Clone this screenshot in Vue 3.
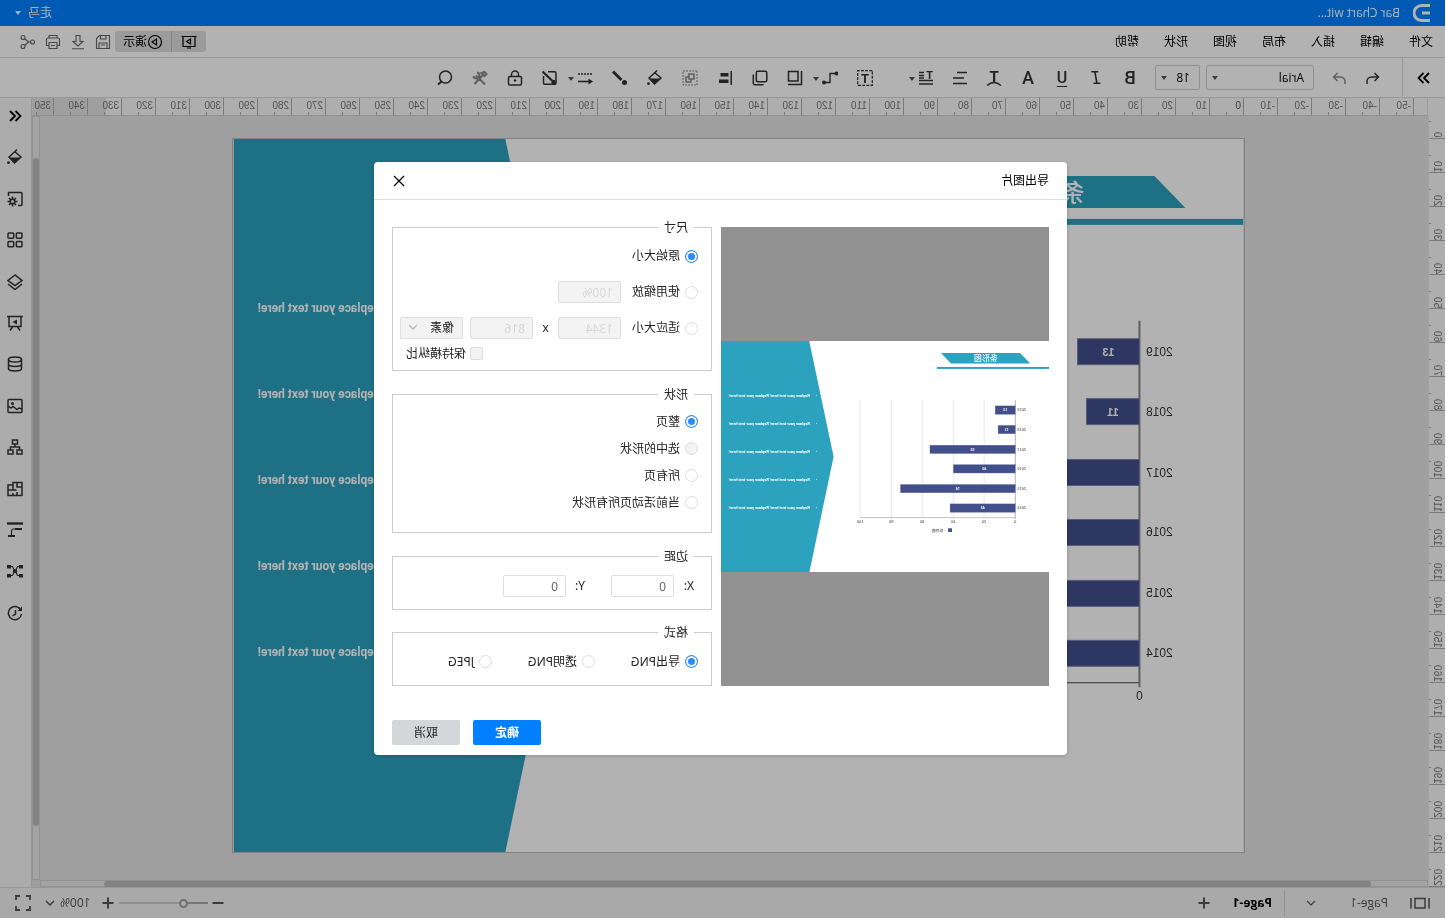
<script setup>
import { ref } from 'vue'

const menus = ['文件', '编辑', '插入', '布局', '视图', '形状', '帮助']

const glyphs = {
  logo: '<path d="M1 1.500h8.500a7.500 7.500 0 0 1 0 15H1M1 9h8" stroke-width="3"/>',
  undo: '<path d="M14 14v-2.500a4.500 4.500 0 0 0-4.500-4.500H2.500M6.500 3l-4 4 4 4"/>',
  redo: '<path d="M2 14v-2.500a4.500 4.500 0 0 1 4.500-4.500h7M9.500 3l4 4-4 4"/>',
  more: '<path d="M3 3l5 5-5 5M8.500 3l5 5-5 5" stroke-width="1.800"/>',
  less: '<path d="M13 3L8 8l5 5M7.500 3l-5 5 5 5" stroke-width="1.800"/>',
  curve: '<text x="8" y="11.500" font-size="15">T</text><path d="M1 15.500q7-6 14 0"/>',
  lines: '<path d="M1 2.500h10M4 8h11M1 13.500h14" stroke-width="1.600"/>',
  para: '<text x="4.500" y="8.500" font-size="11">T</text><path d="M10 2.500h5M10 5.500h5M1 10.500h14M1 14h14M10 8h5" stroke-width="1.300"/>',
  textbox: '<rect x=".700" y=".700" width="14.600" height="14.600" stroke-width="1.200" stroke-dasharray="3 1.200"/><text x="8" y="12.500" font-size="13">T</text>',
  connector: '<path d="M1.500 3.500H8v9h6.500" stroke-width="1.400"/><circle cx="1.500" cy="3.500" r="2" class="solid"/><circle cx="14" cy="12.500" r="2" class="solid"/>',
  front: '<path d="M5 1.500h9.500v9.500H5zM1.500 1v13.500H15"/>',
  copy: '<rect x="1.200" y="1.200" width="10.500" height="10.500" rx="1.500"/><path d="M4.500 14.700h8.700a1.500 1.500 0 0 0 1.500-1.500V4.500"/>',
  align: '<path d="M1.800 1v14" stroke-width="1.500"/><path d="M4.500 3h8v3.500h-8zM4.500 9.500H14V13H4.500z" class="solid"/>',
  group: '<rect x="1" y="1" width="14" height="14" stroke-width="1" stroke-dasharray="2 1"/><path d="M4 4h5v5H4zM9 7h3v5H7V9"/>',
  bucket: '<path d="M6 .500L9 3.500M8 2.500L14 8l-5.500 6L2 8l6.500-5.500"/><path d="M2.500 8.500h11L8.500 14.500z" class="solid"/><circle cx="14.500" cy="13.700" r="1.400" class="solid"/>',
  brush: '<path d="M15 1.500L6.500 10" stroke-width="2.800"/><circle cx="3.500" cy="12.500" r="2.500" class="solid"/>',
  dash: '<path d="M1 4h14" stroke-dasharray="2 1" stroke-width="1.600"/><path d="M15 11.500H2" stroke-width="1.600"/><path d="M0 11.500L4.500 8.500v6z" class="solid"/>',
  edit: '<path d="M10 1.700H3.500A1.500 1.500 0 0 0 2 3.200v9.600A1.500 1.500 0 0 0 3.500 14.300h9.500a1.500 1.500 0 0 0 1.500-1.500V6"/><path d="M15.500 1.500L6 10.500" stroke-width="2.300"/><circle cx="4.500" cy="12" r="2.300" class="solid"/>',
  lock: '<rect x="1.500" y="6.500" width="13" height="8.500" rx="1.500"/><path d="M4.500 6.500V4.500a3.500 3.500 0 0 1 7 0v2"/><circle cx="8" cy="10.500" r="1.300" class="solid"/>',
  tools: '<path d="M3 14.500l9-9M11 2.500a3 3 0 1 0 3.500 3.500M3.500 2L1.500 4l2 2 3-3zM5 5l8.500 9" stroke-width="2"/>',
  search: '<circle cx="7.500" cy="7" r="6"/><path d="M11.500 11.500l3.500 3" stroke-width="2"/>',
  screen: '<path d="M.5 2.500h15M2 3v9.500h12V3M6 14h4"/><path d="M6.500 5v5l4-2.500z"/>',
  play: '<circle cx="8" cy="8" r="6.500"/><path d="M6.500 5v6l4.500-3z"/>',
  save: '<path d="M1.500 1.500h10l3 3v10h-13zM4 14.500V9h8v5.500M5 1.500V5h5.500V1.500M6 11h4"/>',
  download: '<path d="M6 1.500h4v6h3L8 12 3 7.500h3zM2 14.800h12"/>',
  print: '<path d="M4 4V1.500h8V4M3.500 11.500h-2v-6a1.500 1.500 0 0 1 1.500-1.500h10a1.500 1.500 0 0 1 1.500 1.500v6h-2M4 8.500h8v6H4zM6 11.500h4"/>',
  share: '<circle cx="3.500" cy="8" r="2"/><circle cx="13" cy="3.500" r="2"/><circle cx="13" cy="12.500" r="2"/><path d="M5.500 8h2l4-3.500M7.500 8l4 3.500"/>',
  sheetset: '<path d="M5 14.500H2A1 1 0 0 1 1 13.500v-11a1 1 0 0 1 1-1h12.500V5"/><path d="M10.500 5.500v10M5.500 10.500h10M7 7l7 7M14 7l-7 7" stroke-width="1.600"/><circle cx="10.500" cy="10.500" r="3" class="solid"/><circle cx="10.500" cy="10.500" r="1.500" class="hole"/>',
  grid: '<rect x="1" y="1" width="5.700" height="5.300" rx="1"/><rect x="9.300" y="1" width="5.700" height="5.300" rx="1"/><rect x="1" y="9.500" width="5.700" height="5.300" rx="1"/><rect x="9.300" y="9.500" width="5.700" height="5.300" rx="1"/>',
  layers: '<path d="M8 1l7 5.500-7 5-7-5zM1 10l7 5.500 7-5.500"/>',
  board: '<path d="M0 1.500h16M2 2v9.500h12V2M5.500 12L3 15.500M10.500 12l2.500 3.500"/><path d="M6 4.500v5L10.500 7z" class="solid"/>',
  data: '<ellipse cx="8" cy="3.500" rx="6.500" ry="2.500"/><path d="M1.500 3.500v9c0 3.300 13 3.300 13 0v-9M1.500 8c0 3.300 13 3.300 13 0"/>',
  image: '<rect x="1" y="1.500" width="14" height="13" rx="1"/><path d="M1 11l3-1 2 1.500 4-3 2 1.500 3-2"/><circle cx="10.500" cy="5.500" r="1.500" class="solid"/>',
  tree: '<path d="M5.500 1h5v4h-5zM1 11h5v4H1zM10 11h5v4h-5zM8 5v3M3.500 11V8h9v3"/>',
  plan: '<path d="M1 1.500h9V4h5v10.500H1zM6 1.500V6H1M10 4v5M6.500 9H15M6 14.500V11M10 12v2.500"/>',
  gantt: '<path d="M0 1.500h16" stroke-width="2.400"/><path d="M1 7h7M8 14h7" stroke-width="2.200"/><path d="M8 7h1.500a2 2 0 0 1 2 2v5" stroke-width="1.200"/>',
  mesh: '<path d="M0 2h4v3.500H0zM12 2h4v3.500h-4zM0 11h4v3.500H0zM12 11h4v3.500h-4zM6 6.500h4v3.500H6z" class="solid"/><path d="M4 3.500h1.500l2 4M12 3.500h-1.500l-2 4M4 12.500h1.500l2-4M12 12.500h-1.500l-2-4" stroke-width="1.200"/>',
  history: '<path d="M2.500 4.500A6.600 6.600 0 1 1 1.500 9"/><path d="M1 1.500v4.500h4.500z" class="solid"/><path d="M7.500 5v4l3 2"/>',
  frame: '<path d="M1 3v10.500M19 3v10.500M5 3.500h10v9.500H5z"/>',
  down: '<path d="M4 6l4 4 4-4"/>',
  plus: '<path d="M8 2.500v11M2.500 8h11" stroke-width="2"/>',
  minus: '<path d="M2.500 8h11" stroke-width="2"/>',
  full: '<path d="M1 5V1h4M11 1h4v4M15 11v4h-4M5 15H1v-4" stroke-width="1.800"/>',
  close: '<path d="M3 3l10 10M13 3L3 13" stroke-width="1.200"/>'
}

const letters = ['B', 'I', 'U', 'A']
const textTools = [{ n: 'curve' }, { n: 'lines' }, { n: 'para', caret: true }]
const shapeTools = [
  { n: 'textbox' }, { n: 'connector', caret: true }, { n: 'front' }, { n: 'copy' }, { n: 'align' },
  { n: 'group', off: true }, { n: 'bucket' }, { n: 'brush' }, { n: 'dash', caret: true }, { n: 'edit' },
  { n: 'lock' }, { n: 'tools', off: true }, { n: 'search' }
]
const fileTools = ['save', 'download', 'print', 'share']
const sideTools = ['less', 'bucket', 'sheetset', 'grid', 'layers', 'board', 'data', 'image', 'tree', 'plan', 'gantt', 'mesh', 'history']

const hTicks = Array.from({ length: 41 }, (_, i) => i * 10 - 50)
const vTicks = Array.from({ length: 23 }, (_, i) => i * 10)

const bars = [
  { year: 2019, v: 13 }, { year: 2018, v: 11 }, { year: 2017, v: 55 },
  { year: 2016, v: 40 }, { year: 2015, v: 74 }, { year: 2014, v: 42 }
].map((b, i) => ({ ...b, y: 200 + Math.round(i * 60.4), w: Math.round(b.v * 4.78) }))
const axis = [0, 20, 40, 60, 80, 100].map(v => ({ v, x: 104 + Math.round(v * 4.78) }))
const notes = [0, 1, 2, 3, 4].map(i => 173 + Math.round(i * 86.25))

const size = ref('origin')
const scope = ref('page')
const format = ref('png')
const scopes = [
  { id: 'page', label: '整页' },
  { id: 'selected', label: '选中的形状', off: true },
  { id: 'all', label: '所有页' },
  { id: 'active', label: '当前活动页所有形状' }
]
const formats = [
  { id: 'png', label: '导出PNG' },
  { id: 'clear', label: '透明PNG' },
  { id: 'jpeg', label: 'JPEG' }
]
</script>

<template>
  <div class="app">
    <header class="titlebar">
      <svg class="logo" viewBox="0 0 18 18" v-html="glyphs.logo"></svg>
      <span class="doc">Bar Chart wit...</span>
      <button class="user">走马<i class="caret"></i></button>
    </header>

    <nav class="menubar">
      <button v-for="m in menus" :key="m" class="menu">{{ m }}</button>
      <div class="filetools">
        <div class="present">
          <button aria-label="放映"><svg viewBox="0 0 16 16" v-html="glyphs.screen"></svg></button>
          <button><svg viewBox="0 0 16 16" v-html="glyphs.play"></svg>演示</button>
        </div>
        <button v-for="f in fileTools" :key="f" class="ftool" :aria-label="f"><svg viewBox="0 0 16 16" v-html="glyphs[f]"></svg></button>
      </div>
    </nav>

    <div class="toolbar">
      <button class="expand" aria-label="more"><svg viewBox="0 0 16 16" v-html="glyphs.more"></svg></button>
      <div class="history-tools">
        <button class="tool" aria-label="undo"><svg viewBox="0 0 16 16" v-html="glyphs.undo"></svg></button>
        <button class="tool off" aria-label="redo"><svg viewBox="0 0 16 16" v-html="glyphs.redo"></svg></button>
      </div>
      <button class="pick family">Arial<i class="caret"></i></button>
      <button class="pick points">18<i class="caret"></i></button>
      <div class="set">
        <button v-for="l in letters" :key="l" class="tool letter" :class="'l' + l">{{ l }}</button>
        <button v-for="t in textTools" :key="t.n" class="tool" :aria-label="t.n">
          <svg viewBox="0 0 16 16" v-html="glyphs[t.n]"></svg><i v-if="t.caret" class="caret"></i>
        </button>
      </div>
      <div class="set wide">
        <button v-for="t in shapeTools" :key="t.n" class="tool" :class="{ off: t.off }" :aria-label="t.n">
          <svg viewBox="0 0 16 16" v-html="glyphs[t.n]"></svg><i v-if="t.caret" class="caret"></i>
        </button>
      </div>
    </div>

    <main class="work">
      <section class="stage">
        <div class="corner"></div>
        <div class="hruler"><span v-for="t in hTicks" :key="t" :class="{ origin: t === 0 }">{{ t }}</span></div>
        <div class="vruler"><div class="vticks"><span v-for="t in vTicks" :key="t"><b>{{ t }}</b></span></div></div>
        <div class="canvas">
          <svg class="page" viewBox="0 0 1011 714">
            <symbol id="slide" viewBox="0 0 1011 714">
              <rect width="1011" height="714" fill="#fff" />
              <path d="M739 0H1011V714H739L664 357z" fill="#2ca2bf" />
              <path d="M89 37H333L302 69H58z" fill="#2ca2bf" />
              <rect y="80" width="346" height="6" fill="#2ca2bf" />
              <text x="195" y="62" class="heading">条形图</text>
              <g v-for="y in notes" :key="y" class="note">
                <text x="714" :y="y">•</text>
                <text x="987" :y="y" text-anchor="end">Replace your text here! Replace your text here!</text>
              </g>
              <g v-for="a in axis" :key="a.v">
                <path v-if="a.v" :d="`M${a.x} 182V545`" stroke="#ddd" stroke-width="2" />
                <text :x="a.x" y="562" class="scale">{{ a.v }}</text>
              </g>
              <path d="M104 544.5H582" stroke="#444" />
              <path d="M104 182V549" stroke="#888" stroke-width="2" />
              <g v-for="b in bars" :key="b.year">
                <rect x="104" :y="b.y" :width="b.w" height="26" fill="#424f8b" stroke="#7d86ae" />
                <text :x="104 + b.w / 2" :y="b.y + 17" class="value">{{ b.v }}</text>
                <text x="84" :y="b.y + 17" class="scale">{{ b.year }}</text>
              </g>
              <rect x="299" y="577" width="12" height="12" rx="2" fill="#424f8b" />
              <text x="340" y="588" class="scale">: 系列值</text>
            </symbol>
            <use href="#slide" />
          </svg>
        </div>
        <div class="vbar"><div></div></div>
        <div class="hbar"><div></div></div>
      </section>
      <aside class="side">
        <button v-for="s in sideTools" :key="s" :class="s" :aria-label="s"><svg viewBox="0 0 16 16" v-html="glyphs[s]"></svg></button>
      </aside>
    </main>

    <footer class="status">
      <svg class="frame" viewBox="0 0 20 16" v-html="glyphs.frame"></svg>
      <span class="current">Page-1</span>
      <svg class="pages" viewBox="0 0 16 16" v-html="glyphs.down"></svg>
      <button class="tab">Page-1</button>
      <button class="add" aria-label="add page"><svg viewBox="0 0 16 16" v-html="glyphs.plus"></svg></button>
      <div class="zoom">
        <button aria-label="zoom out"><svg viewBox="0 0 16 16" v-html="glyphs.minus"></svg></button>
        <input type="range" aria-label="zoom" min="0" max="100" value="24" />
        <button aria-label="zoom in"><svg viewBox="0 0 16 16" v-html="glyphs.plus"></svg></button>
        <span>100%</span>
        <button class="list" aria-label="zoom list"><svg viewBox="0 0 16 16" v-html="glyphs.down"></svg></button>
        <button class="full" aria-label="full screen"><svg viewBox="0 0 16 16" v-html="glyphs.full"></svg></button>
      </div>
    </footer>

    <div class="mask">
      <form class="dialog" role="dialog" aria-labelledby="dlg-title" @submit.prevent>
        <div class="head">
          <span id="dlg-title">导出图片</span>
          <button type="button" aria-label="close"><svg viewBox="0 0 16 16" v-html="glyphs.close"></svg></button>
        </div>
        <div class="body">
          <div class="preview"><svg viewBox="0 0 1011 714"><use href="#slide" /></svg></div>
          <div class="fields">
            <fieldset class="size">
              <legend>尺寸</legend>
              <div class="row"><label class="opt"><input v-model="size" type="radio" value="origin" />原始大小</label></div>
              <div class="row">
                <label class="opt"><input v-model="size" type="radio" value="scale" />使用缩放</label>
                <input class="box" aria-label="缩放" value="100%" disabled />
              </div>
              <div class="row">
                <label class="opt"><input v-model="size" type="radio" value="fit" />适应大小</label>
                <input class="box" aria-label="宽" value="1344" disabled />
                <span class="times">x</span>
                <input class="box" aria-label="高" value="816" disabled />
                <span class="unit">
                  <select aria-label="单位" disabled><option>像素</option></select>
                  <svg viewBox="0 0 16 16" v-html="glyphs.down"></svg>
                </span>
              </div>
              <label class="ratio"><input type="checkbox" disabled />保持横纵比</label>
            </fieldset>
            <fieldset class="scope">
              <legend>形状</legend>
              <label v-for="s in scopes" :key="s.id" class="opt"><input v-model="scope" type="radio" :value="s.id" :disabled="s.off" />{{ s.label }}</label>
            </fieldset>
            <fieldset class="margin">
              <legend>边距</legend>
              <div class="offsets">
                <label for="mx">X:</label><input id="mx" class="box" value="0" />
                <label for="my" class="second">Y:</label><input id="my" class="box" value="0" />
              </div>
            </fieldset>
            <fieldset class="format">
              <legend>格式</legend>
              <label v-for="f in formats" :key="f.id" class="opt"><input v-model="format" type="radio" :value="f.id" />{{ f.label }}</label>
            </fieldset>
          </div>
        </div>
        <div class="actions">
          <button class="ok">确定</button>
          <button type="button" class="cancel">取消</button>
        </div>
      </form>
    </div>
  </div>
</template>

<style>
html, body { background: #fff; }
svg .solid { fill: currentColor; stroke: none; }
svg .hole { fill: #f6f6f6; stroke: none; }
svg[viewBox="0 0 16 16"] text { fill: currentColor; stroke: none; font-family: Roboto, sans-serif; font-weight: 700; text-anchor: middle; }
</style>

<style scoped>
.app {
  transform: scaleX(-1);
  position: relative;
  height: 100vh;
  padding-left: 1px;
  box-sizing: border-box;
  display: flex;
  flex-direction: column;
  overflow: hidden;
  font: 12px/16px "Noto Sans", "Noto Sans CJK SC", sans-serif;
  color: #222;
}
.app *, .app *::before { box-sizing: border-box; }
button { border: 0; background: none; padding: 0; margin: 0; font: inherit; color: inherit; display: flex; align-items: center; justify-content: center; }
svg { width: 16px; height: 16px; fill: none; stroke: currentColor; stroke-width: 1.5; flex: none; }
.caret { width: 0; height: 0; border: 3px solid transparent; border-top: 4px solid currentColor; border-bottom: 0; }

.titlebar { height: 26px; flex: none; background: #0080ff; color: #fff; display: flex; align-items: center; padding: 0 15px 0 14px; }
.logo { width: 18px; height: 18px; margin-right: 13px; }
.doc { font-family: "Open Sans", sans-serif; }
.user { margin-left: auto; gap: 7px; }

.menubar { height: 32px; flex: none; display: flex; align-items: center; gap: 25px; padding: 0 20px 0 12px; border-bottom: 1px solid #dadada; }
.menu { color: #000; }
.filetools { margin-left: auto; display: flex; align-items: center; gap: 9px; color: #666; }
.present { display: flex; background: #dedede; border-radius: 3px; color: #000; height: 21px; margin-right: -5px; }
.present button { width: 34px; }
.present button + button { width: 57px; border-left: 1px solid #bbb; }
.present svg { stroke-width: 1.2; }
.ftool svg { stroke-width: 1.1; }

.toolbar { height: 40px; flex: none; display: flex; align-items: center; border-bottom: 1px solid #dadada; color: #333; }
.expand { width: 43px; height: 39px; border-right: 1px solid #dadada; color: #000; }
.history-tools { display: flex; margin: 0 8px 0 12px; }
.tool { position: relative; width: 34px; height: 30px; }
.tool .caret { position: absolute; right: 0; top: 14px; color: #555; }
.off { color: #8a8a8a; }
.pick { height: 25px; border: 1px solid #d0d0d0; border-radius: 2px; color: #000; justify-content: space-between; padding: 0 5px 0 9px; font-family: "Open Sans", sans-serif; }
.pick .caret { color: #555; }
.family { width: 108px; margin-right: 6px; }
.points { width: 45px; margin-right: 8px; }
.set { display: flex; }
.wide { margin-left: 26px; }
.wide .tool { width: 35px; }
.letter { font: 500 18px/20px Roboto, sans-serif; }
.lI { font-family: "DejaVu Sans Mono", monospace; font-style: italic; font-size: 17px; }
.lU { font-size: 16px; text-decoration: underline; text-underline-offset: 3px; }

.work { flex: 1; min-height: 0; display: flex; }
.stage { flex: 1; min-width: 0; display: grid; grid-template: 18px 1fr 7px / 17px 1fr 8px; background: #e4e4e4; }
.corner { background: #fafafa; }
.hruler { grid-column: 2 / 4; display: flex; overflow: hidden; padding-left: 13px; border-left: 1px solid #e0e0e0; border-bottom: 1px solid #d0d0d0; background: linear-gradient(to right, #fafafa 1321px, #e4e4e4 0); }
.hruler span, .vruler span { font: 10px/15px "Liberation Sans", sans-serif; color: #777; }
.hruler span { flex: 0 0 34px; border-left: 1px solid #b0b0b0; padding-left: 2px; background: linear-gradient(#b0b0b0, #b0b0b0) 16px 100% / 1px 3px no-repeat; }
.hruler .origin { color: #555; }
.vruler { grid-row: 2 / 4; overflow: hidden; background: #fafafa; border-right: 1px solid #e8e8e8; min-height: 0; }
.vticks { height: 100%; margin-top: -11px; }
.vruler span { display: flex; align-items: flex-end; height: 34px; border-bottom: 1px solid #b0b0b0; background: linear-gradient(#b0b0b0, #b0b0b0) 100% 16px / 2px 1px no-repeat; }
.vruler b { font-weight: 400; writing-mode: vertical-rl; transform: rotate(180deg); }
.canvas { grid-column: 2; grid-row: 2; padding: 22px 0 0 183px; overflow: hidden; min-height: 0; }
.page { display: block; width: 1013px; height: 715px; border: 1px solid #bbb; stroke: none; stroke-width: 1; }
.preview svg { width: 100%; height: auto; stroke: none; stroke-width: 1; }
.heading { font: 500 24px "Noto Sans CJK SC", sans-serif; fill: #fff; text-anchor: middle; }
.note { font: 700 12px Roboto, sans-serif; fill: #fff; }
.scale { font: 12px "Liberation Sans", "Noto Sans CJK SC", sans-serif; fill: #333; text-anchor: middle; }
.value { font: 700 11px "Liberation Sans", sans-serif; fill: #fff; text-anchor: middle; }
.vbar { grid-column: 3; grid-row: 2; border: 1px solid #d0d0d0; background: #eaeaea; padding-top: 41px; }
.vbar div { height: 668px; background: #bababa; border-radius: 3px; }
.hbar { grid-column: 2; grid-row: 3; border: 1px solid #d0d0d0; background: #eaeaea; padding: 0 63px 0 56px; }
.hbar div { height: 6px; background: #bababa; border-radius: 3px; }
.side { width: 32px; height: 100%; background: #f6f6f6; border-left: 1px solid #dadada; padding: 10px 0 266px 1px; display: flex; flex-direction: column; align-items: center; justify-content: space-between; color: #333; }
.side .less { color: #000; }

.status { height: 31px; flex: none; background: #f3f3f3; border-top: 1px solid #dadada; display: flex; align-items: center; font-family: "Open Sans", sans-serif; color: #555; }
.frame { width: 20px; margin: 0 22px 0 15px; }
.current { width: 69px; }
.pages { width: 16px; margin-right: 18px; stroke-width: 1.2; }
.tab { border-left: 1px solid #d0d0d0; height: 26px; padding: 0 21px 0 12px; font-weight: 700; color: #000; }
.zoom { margin-left: auto; display: flex; align-items: center; padding-right: 15px; }
.zoom span { margin: 0 2px 0 9px; }
.full { margin-left: 11px; }
input[type=range] { appearance: none; width: 89px; height: 12px; margin: 0 3px 0 2px; background: linear-gradient(to right, #aaa 24%, #ccc 0) center / 100% 2px no-repeat; }
input[type=range]::-webkit-slider-thumb { appearance: none; width: 9px; height: 9px; border: 2px solid #a0a0a0; border-radius: 50%; background: #f3f3f3; }

.mask { position: absolute; inset: 0 0 0 1px; background: rgba(0, 0, 0, .3); display: flex; align-items: center; justify-content: center; padding: 0 0 1px 4px; }
.dialog { width: 693px; background: #fff; border-radius: 4px; padding-bottom: 10px; box-shadow: 0 1px 4px rgba(0, 0, 0, .2); color: #222; }
.head { height: 38px; border-bottom: 1px solid #ddd; display: flex; align-items: center; justify-content: space-between; padding: 1px 17px 0 18px; color: #000; }
.body { display: flex; gap: 9px; padding: 20px 18px 34px; }
.preview { flex: 1; margin-top: 7px; background: #929292; display: flex; align-items: center; }
.fields { width: 320px; display: flex; flex-direction: column; gap: 16px; }
fieldset { margin: 0; min-width: 0; border: 1px solid #ccc; padding: 0 7px 0 13px; }
legend { margin-left: 4px; padding: 0 6px; height: 15px; line-height: 15px; }
.size { padding-top: 3px; padding-bottom: 9px; }
.row { display: flex; align-items: center; height: 36px; }
.opt { display: flex; align-items: center; gap: 5px; }
.row .opt { width: 77px; }
input[type=radio], input[type=checkbox] { appearance: none; width: 13px; height: 13px; margin: 0; border: 1px solid #ddd; border-radius: 50%; background: #fff; flex: none; }
input[type=checkbox] { border-radius: 2px; }
input:disabled, select:disabled { background: #f3f3f3; color: #d8d8d8; opacity: 1; }
input[type=radio]:disabled, input[type=checkbox]:disabled { background: #f3f3f3; }
input[type=radio]:checked { border-color: #2d8cf0; background: #2d8cf0; box-shadow: inset 0 0 0 2px #fff; }
.box { width: 63px; height: 22px; border: 1px solid #dcdee2; border-radius: 2px; padding: 0 7px; margin: 0; font: inherit; color: #666; outline: 0; }
.times { width: 25px; text-align: center; }
.unit { position: relative; margin-left: 7px; }
.unit select { display: block; appearance: none; width: 63px; height: 22px; border: 1px solid #dcdee2; border-radius: 2px; padding: 0 8px; font: inherit; color: #222; }
.unit svg { position: absolute; right: 5px; top: 2px; color: #bbb; }
.ratio { display: flex; align-items: center; gap: 4px; height: 15px; padding-left: 215px; }
.scope { padding-top: 6px; padding-bottom: 16px; }
.scope .opt { height: 27px; }
.margin { padding-top: 11px; padding-bottom: 12px; }
.offsets { display: flex; align-items: center; padding-left: 4px; }
.offsets label { width: 20px; }
.offsets .second { width: 19px; margin-left: 26px; }
.format { display: flex; padding-top: 8px; padding-bottom: 10px; margin-top: -1px; }
.format .opt { height: 27px; width: 103px; }
.format .opt:last-child { width: auto; }
.actions { display: flex; justify-content: flex-end; gap: 13px; padding-right: 18px; }
.actions button { width: 68px; height: 25px; border-radius: 2px; }
.ok { background: #0080ff; color: #fff; font-weight: 700; }
.cancel { background: #d5d6da; }
</style>
